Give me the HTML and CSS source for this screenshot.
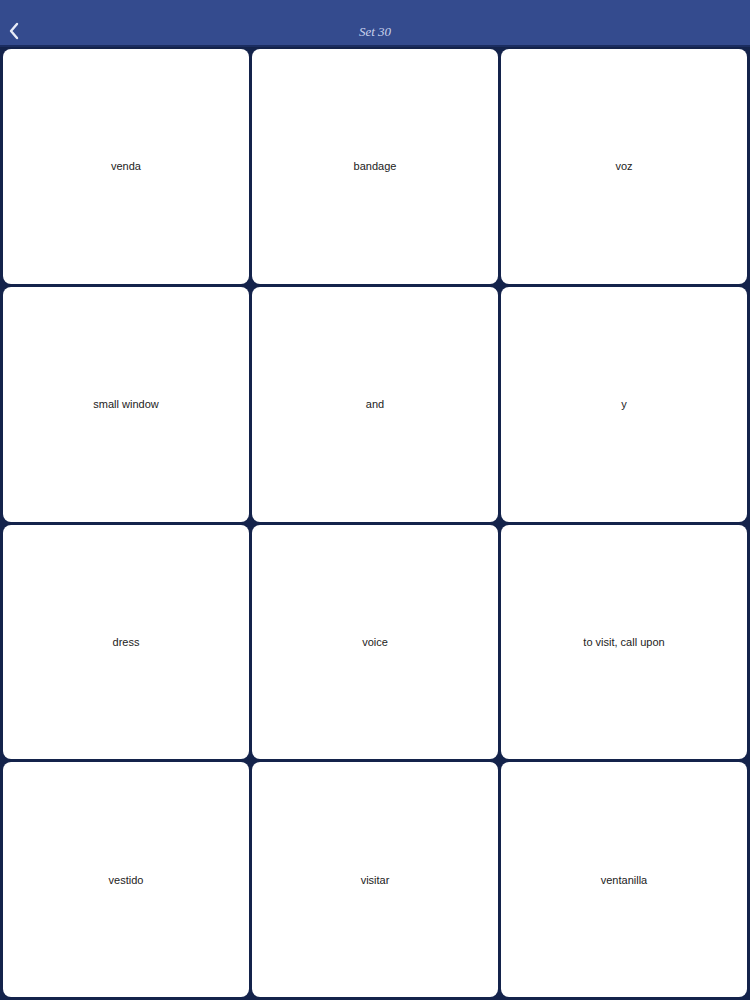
FILE: index.html
```html
<!DOCTYPE html>
<html>
<head>
<meta charset="utf-8">
<link rel="stylesheet" href="styles.css">
</head>
<body>
<div class="app">
  <header class="nav">
    <span class="back">
      <svg width="12" height="18" viewBox="0 0 12 18"><path d="M9 2 L3 9 L9 16" fill="none" stroke="#e8ecf8" stroke-width="2.4" stroke-linecap="round" stroke-linejoin="round"/></svg>
    </span>
    <span class="title">Set 30</span>
  </header>
  <main class="grid">
    <div class="card">venda</div>
    <div class="card">bandage</div>
    <div class="card">voz</div>
    <div class="card">small window</div>
    <div class="card">and</div>
    <div class="card">y</div>
    <div class="card">dress</div>
    <div class="card">voice</div>
    <div class="card">to visit, call upon</div>
    <div class="card">vestido</div>
    <div class="card">visitar</div>
    <div class="card">ventanilla</div>
  </main>
</div>
</body>
</html>
```
FILE: styles.css
```css
html, body {
  margin: 0;
  padding: 0;
  background: #14234b;
}
.app {
  width: 750px;
  height: 1000px;
  display: flex;
  flex-direction: column;
  background: #14234b;
}
.nav {
  height: 47px;
  flex: 0 0 47px;
  background: #344b8e;
  border-bottom: 2px solid #1b2d60;
  position: relative;
  display: flex;
  align-items: center;
  justify-content: center;
  padding-top: 18px;
  box-sizing: border-box;
}
.back {
  position: absolute;
  left: 8px;
  top: 22px;
  display: flex;
}
.title {
  font-family: "Liberation Serif", serif;
  font-style: italic;
  font-size: 13px;
  color: #c9d2ec;
}
.grid {
  flex: 1;
  display: grid;
  grid-template-columns: repeat(3, 1fr);
  grid-template-rows: repeat(4, 1fr);
  gap: 3px;
  padding: 2px 3px 3px 3px;
}
.card {
  background: #ffffff;
  border-radius: 8px;
  display: flex;
  align-items: center;
  justify-content: center;
  font-family: "Liberation Sans", Arial, sans-serif;
  font-size: 11px;
  color: #222;
}
```
